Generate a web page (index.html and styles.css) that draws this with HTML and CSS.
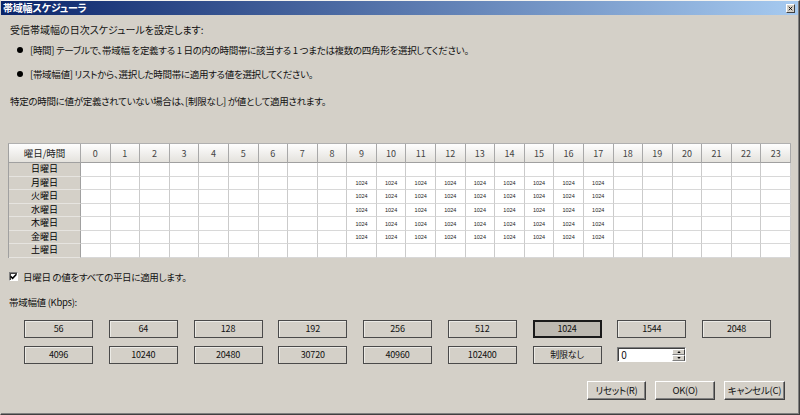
FILE: index.html
```html
<!DOCTYPE html>
<html lang="ja">
<head>
<meta charset="utf-8">
<title>帯域幅スケジューラ</title>
<link rel="stylesheet" href="styles.css">
</head>
<body>
<div class="window">
  <div class="titlebar">
    <span class="title">帯域幅スケジューラ</span>
    <span class="close"><svg width="7" height="7" viewBox="0 0 7 7"><path d="M1 1L6 6M6 1L1 6" stroke="#000" stroke-width="1.2"/></svg></span>
  </div>
  <div class="content">
    <p class="intro">受信帯域幅の日次スケジュールを設定します:</p>
    <ul class="bullets">
      <li><span class="dot"></span>[時間] テーブルで、帯域幅 を定義する 1 日の内の時間帯に該当する 1 つまたは複数の四角形を選択してください。</li>
      <li><span class="dot"></span>[帯域幅値] リストから、選択した時間帯に適用する値を選択してください。</li>
    </ul>
    <p class="note">特定の時間に値が定義されていない場合は、[制限なし] が値として適用されます。</p>

    <div class="grid">
      <div class="hd corner">曜日/時間</div>
      <div class="hd">0</div><div class="hd">1</div><div class="hd">2</div><div class="hd">3</div><div class="hd">4</div><div class="hd">5</div><div class="hd">6</div><div class="hd">7</div><div class="hd">8</div><div class="hd">9</div><div class="hd">10</div><div class="hd">11</div><div class="hd">12</div><div class="hd">13</div><div class="hd">14</div><div class="hd">15</div><div class="hd">16</div><div class="hd">17</div><div class="hd">18</div><div class="hd">19</div><div class="hd">20</div><div class="hd">21</div><div class="hd">22</div><div class="hd">23</div>

      <div class="day">日曜日</div>
      <div class="c"></div><div class="c"></div><div class="c"></div><div class="c"></div><div class="c"></div><div class="c"></div><div class="c"></div><div class="c"></div><div class="c"></div><div class="c"></div><div class="c"></div><div class="c"></div><div class="c"></div><div class="c"></div><div class="c"></div><div class="c"></div><div class="c"></div><div class="c"></div><div class="c"></div><div class="c"></div><div class="c"></div><div class="c"></div><div class="c"></div><div class="c"></div>

      <div class="day">月曜日</div>
      <div class="c"></div><div class="c"></div><div class="c"></div><div class="c"></div><div class="c"></div><div class="c"></div><div class="c"></div><div class="c"></div><div class="c"></div><div class="c">1024</div><div class="c">1024</div><div class="c">1024</div><div class="c">1024</div><div class="c">1024</div><div class="c">1024</div><div class="c">1024</div><div class="c">1024</div><div class="c">1024</div><div class="c"></div><div class="c"></div><div class="c"></div><div class="c"></div><div class="c"></div><div class="c"></div>

      <div class="day">火曜日</div>
      <div class="c"></div><div class="c"></div><div class="c"></div><div class="c"></div><div class="c"></div><div class="c"></div><div class="c"></div><div class="c"></div><div class="c"></div><div class="c">1024</div><div class="c">1024</div><div class="c">1024</div><div class="c">1024</div><div class="c">1024</div><div class="c">1024</div><div class="c">1024</div><div class="c">1024</div><div class="c">1024</div><div class="c"></div><div class="c"></div><div class="c"></div><div class="c"></div><div class="c"></div><div class="c"></div>

      <div class="day">水曜日</div>
      <div class="c"></div><div class="c"></div><div class="c"></div><div class="c"></div><div class="c"></div><div class="c"></div><div class="c"></div><div class="c"></div><div class="c"></div><div class="c">1024</div><div class="c">1024</div><div class="c">1024</div><div class="c">1024</div><div class="c">1024</div><div class="c">1024</div><div class="c">1024</div><div class="c">1024</div><div class="c">1024</div><div class="c"></div><div class="c"></div><div class="c"></div><div class="c"></div><div class="c"></div><div class="c"></div>

      <div class="day">木曜日</div>
      <div class="c"></div><div class="c"></div><div class="c"></div><div class="c"></div><div class="c"></div><div class="c"></div><div class="c"></div><div class="c"></div><div class="c"></div><div class="c">1024</div><div class="c">1024</div><div class="c">1024</div><div class="c">1024</div><div class="c">1024</div><div class="c">1024</div><div class="c">1024</div><div class="c">1024</div><div class="c">1024</div><div class="c"></div><div class="c"></div><div class="c"></div><div class="c"></div><div class="c"></div><div class="c"></div>

      <div class="day">金曜日</div>
      <div class="c"></div><div class="c"></div><div class="c"></div><div class="c"></div><div class="c"></div><div class="c"></div><div class="c"></div><div class="c"></div><div class="c"></div><div class="c">1024</div><div class="c">1024</div><div class="c">1024</div><div class="c">1024</div><div class="c">1024</div><div class="c">1024</div><div class="c">1024</div><div class="c">1024</div><div class="c">1024</div><div class="c"></div><div class="c"></div><div class="c"></div><div class="c"></div><div class="c"></div><div class="c"></div>

      <div class="day">土曜日</div>
      <div class="c"></div><div class="c"></div><div class="c"></div><div class="c"></div><div class="c"></div><div class="c"></div><div class="c"></div><div class="c"></div><div class="c"></div><div class="c"></div><div class="c"></div><div class="c"></div><div class="c"></div><div class="c"></div><div class="c"></div><div class="c"></div><div class="c"></div><div class="c"></div><div class="c"></div><div class="c"></div><div class="c"></div><div class="c"></div><div class="c"></div><div class="c"></div>
    </div>

    <div class="check">
      <span class="box"><svg width="7" height="7" viewBox="0 0 7 7"><path d="M0.5 3.2L2.6 5.3L6.5 1.2" fill="none" stroke="#000" stroke-width="1.6"/></svg></span>
      <span>日曜日 の値をすべての平日に適用します。</span>
    </div>

    <div class="label">帯域幅値 (Kbps):</div>

    <div class="values">
      <button class="val">56</button>
      <button class="val">64</button>
      <button class="val">128</button>
      <button class="val">192</button>
      <button class="val">256</button>
      <button class="val">512</button>
      <button class="val sel">1024</button>
      <button class="val">1544</button>
      <button class="val">2048</button>
      <button class="val">4096</button>
      <button class="val">10240</button>
      <button class="val">20480</button>
      <button class="val">30720</button>
      <button class="val">40960</button>
      <button class="val">102400</button>
      <button class="val">制限なし</button>
      <div class="spin">
        <span class="spin-val">0</span>
        <span class="spin-btns">
          <span class="spin-up"><svg width="5" height="3" viewBox="0 0 5 3"><path d="M0 3L2.5 0L5 3Z" fill="#000"/></svg></span>
          <span class="spin-down"><svg width="5" height="3" viewBox="0 0 5 3"><path d="M0 0L2.5 3L5 0Z" fill="#000"/></svg></span>
        </span>
      </div>
    </div>

    <div class="actions">
      <button class="btn reset">リセット(R)</button>
      <button class="btn ok">OK(O)</button>
      <button class="btn cancel">キャンセル(C)</button>
    </div>
  </div>
</div>
</body>
</html>
```

FILE: styles.css
```css
* { box-sizing: border-box; }
html, body { margin: 0; padding: 0; }
body {
  width: 800px;
  height: 415px;
  overflow: hidden;
  background: #d4d0c8;
  font-family: "Noto Sans CJK JP", sans-serif;
  font-size: 9.5px;
  letter-spacing: -0.3px;
  color: #111;
  font-feature-settings: "palt";
}
.window {
  width: 800px;
  height: 415px;
  background: #d4d0c8;
  border-top: 1px solid #f4f3f0;
  border-left: 1px solid #d4d0c8;
  border-right: 1px solid #404040;
  border-bottom: 1px solid #404040;
  box-shadow: inset -1px -1px 0 #808080;
  display: flex;
  flex-direction: column;
}
.titlebar {
  height: 14px;
  margin-right: 1px;
  background: linear-gradient(to right, #0a246a, #a6caf0);
  display: flex;
  align-items: center;
  justify-content: space-between;
  padding: 0 3px 0 2px;
}
.title {
  color: #fff;
  font-weight: bold;
  font-size: 10px;
  letter-spacing: -0.2px;
  line-height: 14px;
}
.close {
  width: 9px;
  height: 9px;
  background: #d4d0c8;
  border: 1px solid;
  border-color: #fff #404040 #404040 #fff;
  display: flex;
  align-items: center;
  justify-content: center;
}
.close svg { width: 5px; height: 5px; }
.content { padding: 0 8px 0 7px; }
.intro { margin: 8px 0 0 2px; line-height: 14px; letter-spacing: 0; font-size: 10px; }
.bullets { list-style: none; margin: 6px 0 0; padding: 0; }
.bullets li {
  display: flex;
  align-items: center;
  line-height: 14px;
  margin-left: 9px;
  white-space: pre;
}
.bullets li + li { margin-top: 10px; }
.dot {
  width: 6px;
  height: 6px;
  border-radius: 50%;
  background: #000;
  margin-right: 7px;
  flex: none;
}
.note { margin: 13px 0 0 2px; line-height: 14px; white-space: pre; }

.grid {
  margin-top: 35px;
  display: grid;
  grid-template-columns: 72px repeat(24, 1fr);
  grid-template-rows: 19px repeat(7, 13.57px);
  border-left: 1px solid #a0a0a0;
  border-top: 1px solid #b0b0b0;
  letter-spacing: 0;
}
.hd {
  background: linear-gradient(#fefefe, #e4e2dd);
  border-right: 1px solid #a8a8a8;
  border-bottom: 1px solid #a0a0a0;
  display: flex;
  align-items: center;
  justify-content: center;
  font-size: 9px;
  color: #444;
}
.corner { color: #222; font-size: 9.5px; }
.day {
  background: #d4d0c8;
  border-right: 1px solid #a0a0a0;
  border-bottom: 1px solid #e6e4e0;
  text-align: center;
  font-size: 9px;
  line-height: 12.5px;
  color: #000;
}
.c {
  background: #fff;
  border-right: 1px solid #cbcbcb;
  border-bottom: 1px solid #d8d8d8;
  display: flex;
  align-items: center;
  justify-content: center;
  font-family: "Liberation Sans", sans-serif;
  font-size: 5.5px;
  color: #222;
}

.check {
  margin: 12px 0 0 1px;
  display: flex;
  align-items: center;
  line-height: 14px;
}
.box {
  width: 9px;
  height: 9px;
  background: #fff;
  border: 1px solid;
  border-color: #808080 #fff #fff #808080;
  box-shadow: inset 1px 1px 0 #404040;
  margin-right: 5px;
  display: flex;
  align-items: center;
  justify-content: center;
}
.label { margin: 11px 0 0 1px; line-height: 14px; }

.values {
  margin-top: 11px;
  padding-left: 16px;
  display: grid;
  grid-template-columns: repeat(9, 69px);
  column-gap: 15.75px;
  row-gap: 8px;
}
.val {
  height: 18px;
  margin: 0;
  padding: 0;
  border: 1px solid #4a4a4a;
  background: #d4d0c8;
  box-shadow: inset 1px 1px 0 #ecebe6;
  font-family: "Noto Sans CJK JP", sans-serif;
  font-feature-settings: "palt";
  font-size: 9px;
  letter-spacing: -0.2px;
  color: #111;
}
.val.sel {
  background: #bdb9b1;
  border: 2px solid #1a1a1a;
  box-shadow: none;
}
.spin {
  align-self: center;
  width: 69px;
  height: 15px;
  display: flex;
  background: #fff;
  border: 1px solid;
  border-color: #808080 #fff #fff #808080;
  box-shadow: inset 1px 1px 0 #404040;
}
.spin-val { flex: 1; padding: 1px 0 0 3px; line-height: 12px; font-size: 10px; }
.spin-btns { width: 13px; display: flex; flex-direction: column; padding: 1px 0 0 0; }
.spin-up, .spin-down {
  flex: 1;
  background: #d4d0c8;
  border: 1px solid;
  border-color: #fff #404040 #808080 #fff;
  display: flex;
  align-items: center;
  justify-content: center;
}
.spin-up svg, .spin-down svg { width: 4px; height: 2px; }

.actions {
  margin-top: 17px;
  padding-right: 6px;
  display: flex;
  justify-content: flex-end;
  gap: 9px;
}
.btn {
  height: 19px;
  margin: 0;
  padding: 0;
  border: 1px solid;
  border-color: #fff #404040 #404040 #fff;
  box-shadow: inset -1px -1px 0 #808080;
  background: #d4d0c8;
  font-family: "Noto Sans CJK JP", sans-serif;
  font-feature-settings: "palt";
  font-size: 9.5px;
  letter-spacing: -0.3px;
  color: #111;
}
.reset { width: 59px; }
.ok { width: 60px; }
.cancel { width: 61px; }
```
